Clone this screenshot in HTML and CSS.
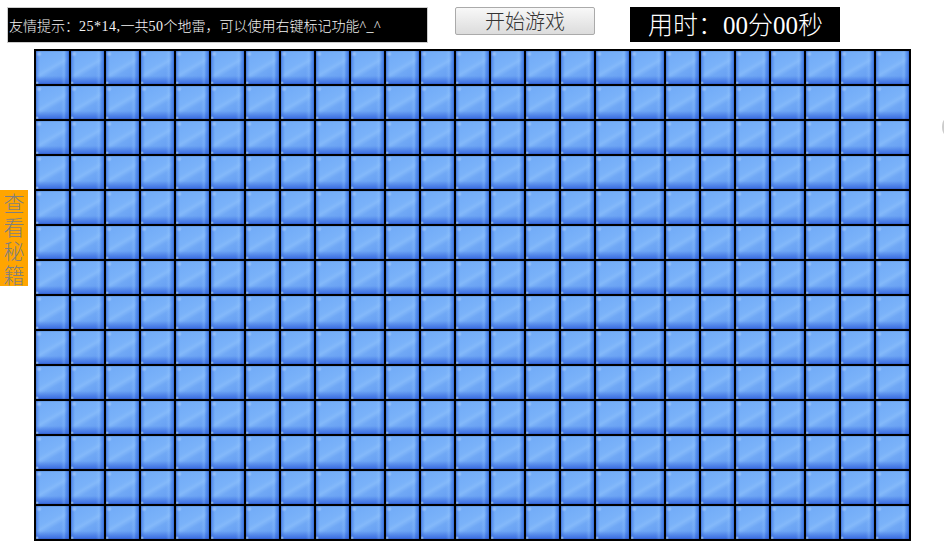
FILE: index.html
```html
<!DOCTYPE html>
<html>
<head>
    <title>扫雷</title>
    <link rel="stylesheet" href="styles.css">
</head>
<body>
    <div class="top">
        <div class="tip">友情提示&#xFF1A;<span class="num">25*14,</span>一共<span class="num">50</span>个地雷&#xFF0C;可以使用右键标记功能<span class="num">^_^</span></div>
        <button class="start">开始游戏</button>
        <div class="timer">用时&#xFF1A;<span class="digits">00</span>分<span class="digits">00</span>秒</div>
    </div>
    <div class="main">
        <div class="cheat">查看秘籍</div>
        <div class="board" id="board"></div>
    </div>
    <div class="edge"></div>
    <script src="script.js"></script>
</body>
</html>
```

FILE: styles.css
```css
body {
    margin: 0;
    background-color: white;
    font-family: "Noto Sans CJK SC", sans-serif;
    overflow: hidden;
}
.top {
    display: flex;
    align-items: flex-start;
    height: 42px;
    padding: 7px 0 0 7px;
}
.tip {
    box-sizing: border-box;
    width: 421px;
    height: 36px;
    padding-left: 1px;
    border: 1px solid #ccc;
    background-color: black;
    color: #f4f4f4;
    font-size: 14px;
    font-weight: 300;
    line-height: 34px;
    white-space: nowrap;
}
.num {
    font-family: "Liberation Serif", serif;
    font-size: 14px;
    letter-spacing: 0.5px;
}
.start {
    box-sizing: border-box;
    width: 140px;
    height: 28px;
    margin-left: 27px;
    padding: 0;
    border: 1px solid #aaa;
    border-radius: 2px;
    background: linear-gradient(#f8f8f8, #dcdcdc);
    color: #333;
    font-family: inherit;
    font-size: 20px;
    font-weight: 300;
    line-height: 26px;
}
.timer {
    box-sizing: border-box;
    width: 210px;
    height: 35px;
    margin-left: 35px;
    padding-left: 18px;
    background-color: black;
    color: white;
    font-size: 25px;
    font-weight: 300;
    line-height: 33px;
}
.digits {
    font-family: "Liberation Serif", serif;
}
.main {
    display: flex;
    align-items: flex-start;
}
.cheat {
    width: 28px;
    margin-top: 141px;
    margin-right: 6px;
    background-color: orange;
    color: #7f7f7f;
    font-size: 21px;
    font-weight: 300;
    line-height: 24px;
    text-align: center;
}
.board {
    display: grid;
    grid-template-columns: repeat(25, 33px);
    grid-auto-rows: 33px;
    gap: 2px;
    padding: 2px;
    background-color: black;
    filter: blur(0.4px);
}
.cell {
    background:
        radial-gradient(circle at 3px 3px, rgba(255,255,255,.35), rgba(255,255,255,0) 3px),
        radial-gradient(circle at 1px 32px, rgba(230,255,240,.7), rgba(255,255,255,0) 2px),
        linear-gradient(to right, rgba(150,200,255,0) 25px, rgba(150,200,255,.3) 28px, rgba(150,200,255,0) 30px),
        linear-gradient(to bottom, rgba(40,90,215,0) 25px, #3a6ce0 33px),
        linear-gradient(to right, #4f86ea 0, rgba(79,134,234,0) 4px, rgba(70,120,230,0) 28px, #3f78e4 33px),
        linear-gradient(150deg, #70aaf7 0, #7ab2f9 42%, #84b9fa 50%, #70a8f5 60%, #6098f0 100%);
    box-shadow: inset 0 0 1px #0a1f66;
}
.edge {
    position: absolute;
    left: 942px;
    top: 113px;
    box-sizing: border-box;
    width: 28px;
    height: 28px;
    border: 2px solid #ccc;
    border-radius: 50%;
    background-color: white;
    filter: blur(0.5px);
}
```

FILE: script.js
```js
var board = document.getElementById('board');
for (var i = 0; i < 25 * 14; i++) {
    var cell = document.createElement('div');
    cell.className = 'cell';
    board.appendChild(cell);
}
```
